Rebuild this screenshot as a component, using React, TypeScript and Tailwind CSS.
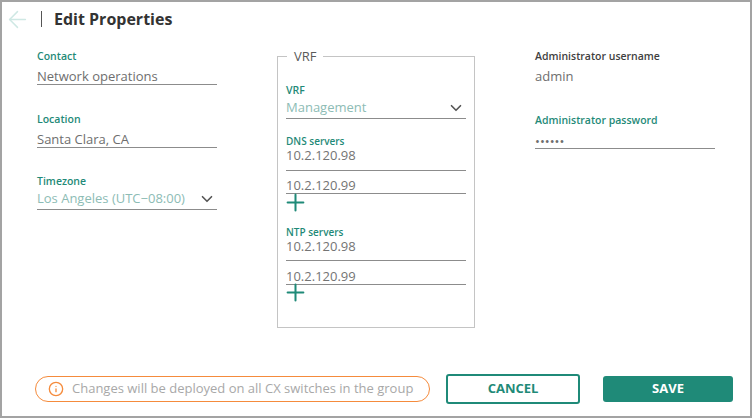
import React from "react";
import { ArrowLeft, ChevronDown, Info, Plus } from "lucide-react";

const Label = ({ text, dark, small }: { text: string; dark?: boolean; small?: boolean }) => (
  <div
    className={`${small ? "text-[10px]" : "text-[10.5px]"} leading-[14px] font-semibold ${dark ? "text-[#3f3f3f]" : "text-[#1f8a78]"}`}
  >
    {text}
  </div>
);

const TextField = ({ label, value }: { label: string; value: string }) => (
  <div className="flex flex-col">
    <Label text={label} />
    <div className="h-[22px] pt-[5px] text-[13px] leading-[16px] text-[#6e6e6e] border-b border-[#8c8c8c]">
      {value}
    </div>
  </div>
);

const SelectField = ({ label, value }: { label: string; value: string }) => (
  <div className="flex flex-col">
    <Label text={label} />
    <div className="h-[22px] flex items-center justify-between border-b border-[#8c8c8c] text-[13px] text-[#8dbcb5]">
      <span>{value}</span>
      <ChevronDown size={18} strokeWidth={2.2} className="text-[#555555] mr-[1px]" />
    </div>
  </div>
);

const ServerList = ({
  label,
  first,
  second,
  tight,
}: {
  label: string;
  first: string;
  second: string;
  tight?: boolean;
}) => (
  <div className="flex flex-col">
    <Label text={label} small />
    <div
      className={`${tight ? "h-[22px]" : "h-[23px]"} text-[13px] leading-[14px] text-[#747474] border-b border-[#8c8c8c]`}
    >
      {first}
    </div>
    <div
      className={`${tight ? "h-[24px] pt-[7px]" : "h-[23px] pt-[6px]"} text-[13px] leading-[16px] text-[#747474] border-b border-[#8c8c8c]`}
    >
      {second}
    </div>
    <Plus
      size={27}
      strokeWidth={1.8}
      className={`text-[#1f8a78] -ml-[4px] ${tight ? "-mt-[6px]" : "-mt-[5px]"}`}
    />
  </div>
);

export default function App() {
  return (
    <div
      className="w-[752px] h-[418px] flex flex-col border-2 border-[#a3a3a3] bg-white overflow-hidden"
      style={{ fontFamily: '"Open Sans", sans-serif' }}
    >
      {/* header */}
      <div className="h-[34px] flex items-center pl-[2px]">
        <ArrowLeft size={27} strokeWidth={1.3} className="text-[#cfe8e4] mt-[1px]" />
        <div className="w-px h-[16px] bg-[#555555] ml-[10px]" />
        <span className="ml-[12px] text-[16px] font-bold text-[#333333]">Edit Properties</span>
      </div>

      {/* form columns */}
      <div className="flex gap-[60px] pl-[35px] pt-[13px]">
        <div className="w-[180px] flex flex-col">
          <TextField label="Contact" value="Network operations" />
          <div className="mt-[27px]">
            <TextField label="Location" value="Santa Clara, CA" />
          </div>
          <div className="mt-[26px]">
            <SelectField label="Timezone" value="Los Angeles (UTC−08:00)" />
          </div>
        </div>

        <fieldset className="w-[198px] h-[281px] -mt-[2px] border border-[#c4c4c4] px-[8px]">
          <legend className="ml-[1px] px-[7px] text-[13px] leading-[18px] text-[#5a5a5a]">VRF</legend>
          <div className="flex flex-col pt-[18px]">
            <SelectField label="VRF" value="Management" />
            <div className="mt-[15px]">
              <ServerList label="DNS servers" first="10.2.120.98" second="10.2.120.99" />
            </div>
            <div className="mt-[9px]">
              <ServerList label="NTP servers" first="10.2.120.98" second="10.2.120.99" tight />
            </div>
          </div>
        </fieldset>

        <div className="w-[180px] flex flex-col">
          <Label text="Administrator username" dark />
          <div className="pt-[5px] text-[13px] leading-[16px] text-[#6e6e6e]">admin</div>
          <div className="mt-[29px]">
            <Label text="Administrator password" />
            <div className="h-[22px] pt-[6px] text-[13px] leading-[16px] text-[#6e6e6e] border-b border-[#8c8c8c]">
              ••••••
            </div>
          </div>
        </div>
      </div>

      {/* footer */}
      <div className="mt-auto pb-[12px] pl-[33px] pr-[17px] flex items-center">
        <div className="w-[395px] h-[26px] flex items-center rounded-full border border-[#f58b3c] pl-[12px]">
          <Info size={16} strokeWidth={2} className="text-[#f58b3c]" />
          <span className="ml-[8px] text-[13px] text-[#a8a8a8] whitespace-nowrap">
            Changes will be deployed on all CX switches in the group
          </span>
        </div>
        <button className="ml-[16px] w-[134px] h-[30px] rounded-[3px] border-2 border-[#1f8a78] bg-white text-[13px] font-bold text-[#1f8a78]">
          CANCEL
        </button>
        <button className="ml-[23px] w-[130px] h-[26px] rounded-[3px] bg-[#1f8a78] text-[13px] font-bold text-white">
          SAVE
        </button>
      </div>
    </div>
  );
}
